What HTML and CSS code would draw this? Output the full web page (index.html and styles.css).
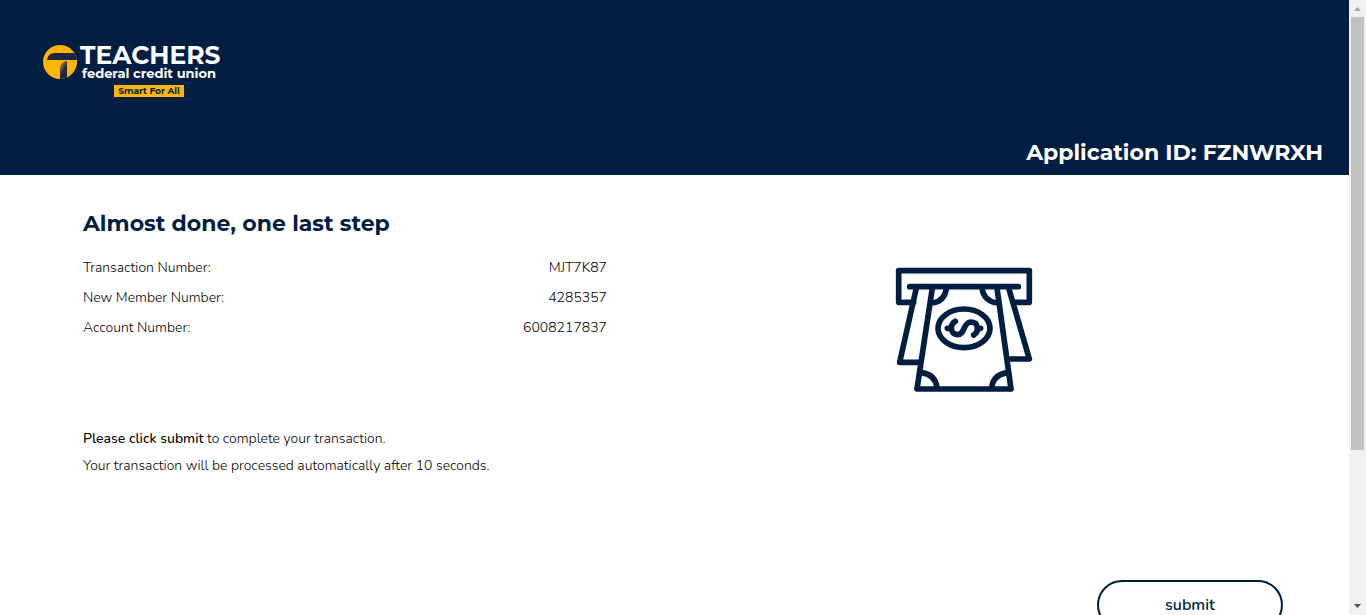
FILE: index.html
```html
<!DOCTYPE html>
<html lang="en">
<head>
<meta charset="utf-8">
<meta name="viewport" content="width=device-width, initial-scale=1">
<title>Teachers Federal Credit Union</title>
<link rel="stylesheet" href="styles.css">
</head>
<body>
<div class="shell">
  <div class="page">
    <header class="header">
      <svg class="logo" viewBox="0 0 180 56" role="img" aria-label="Teachers Federal Credit Union, Smart For All">
        <defs>
          <linearGradient id="fold" x1="0" y1="0" x2="0.6" y2="1">
            <stop offset="0" stop-color="#d09a2a"/>
            <stop offset="0.2" stop-color="#94733c"/>
            <stop offset="0.6" stop-color="#1d2545"/>
          </linearGradient>
          <clipPath id="disc"><circle cx="18" cy="19" r="17"/></clipPath>
        </defs>
        <g clip-path="url(#disc)">
          <rect width="36" height="38" fill="#ffb600"/>
          <path d="M5 17 Q6 10 13 10 H36 V17 H5 Z" fill="#1d2545"/>
          <path d="M18 38 V25 Q18 19 25 18 V38 Z" fill="url(#fold)"/>
        </g>
        <text class="logo-name" x="38" y="21">TEACHERS</text>
        <text class="logo-sub" x="40" y="35">federal credit union</text>
        <rect x="72" y="42" width="70" height="12" fill="#ffb600"/>
        <text class="logo-tag" x="107" y="51">Smart For All</text>
      </svg>
      <p class="application">Application ID: FZNWRXH</p>
    </header>
    <main class="content">
      <section class="details">
        <h1 class="title">Almost done, one last step</h1>
        <dl class="numbers">
          <div class="row"><dt>Transaction Number:</dt><dd>MJT7K87</dd></div>
          <div class="row"><dt>New Member Number:</dt><dd>4285357</dd></div>
          <div class="row"><dt>Account Number:</dt><dd>6008217837</dd></div>
        </dl>
        <p class="note"><strong>Please click submit</strong> to complete your transaction.</p>
        <p class="note">Your transaction will be processed automatically after 10 seconds.</p>
      </section>
      <div class="picture">
        <svg class="cash" viewBox="0 0 480 435" aria-hidden="true">
          <g fill="none" stroke="#001e42" stroke-width="17" stroke-linecap="round" stroke-linejoin="round">
            <path d="M86 133 H41 V38 H433 V133 H388"/>
            <path d="M74 86 H400"/>
            <path d="M94 90 L44 313 H102"/>
            <path d="M371 90 L433 303 H376"/>
            <path d="M142 90 L96 393 H378 L336 90"/>
            <path d="M184 92 Q178 128 146 134"/>
            <path d="M291 92 Q298 128 332 134"/>
            <path d="M108 344 Q150 348 156 388"/>
            <path d="M370 344 Q326 348 320 388"/>
            <ellipse cx="237" cy="211" rx="78" ry="58"/>
            <path d="M187 211 H197 M277 211 H287"/>
            <path d="M211 190 C193 200 196 229 217 230 C240 231 234 193 257 192 C281 192 284 220 266 231"/>
          </g>
        </svg>
      </div>
      <div class="actions"><button class="submit" type="button">submit</button></div>
    </main>
  </div>
  <div class="scrollbar" aria-hidden="true">
    <svg class="arrow" viewBox="0 0 17 17"><path d="M5 11 L8.500 7 L12 11 Z" fill="#a3a3a3"/></svg>
    <div class="track"><div class="thumb"></div></div>
    <svg class="arrow" viewBox="0 0 17 17"><path d="M5 6 H12 L8.500 10 Z" fill="#505050"/></svg>
  </div>
</div>
</body>
</html>
```
FILE: styles.css
```css
* { box-sizing: border-box; }
body {
  margin: 0;
  background: #fff;
  color: #000;
  font-family: Nunito, "Open Sans", sans-serif;
  font-size: 14px;
  font-weight: 300;
}
p, h1, dl, dd { margin: 0; }
.shell { display: flex; height: 100vh; overflow: hidden; }
.page { flex: 1; min-width: 0; overflow: hidden; }
.header {
  display: flex;
  flex-direction: column;
  justify-content: space-between;
  padding: 43px 26px 7px 42px;
  min-height: 175px;
  background: #001e42;
  color: #fff;
}
.logo { width: 180px; height: 56px; overflow: visible; }
.logo text { font-family: Montserrat, Inter, sans-serif; fill: #fff; }
.logo .logo-name { font-size: 25px; font-weight: 700; }
.logo .logo-sub { font-size: 13px; font-weight: 700; }
.logo .logo-tag { font-size: 9px; font-weight: 700; fill: #001e42; text-anchor: middle; }
.application {
  align-self: flex-end;
  font: 700 22px/30px Montserrat, Inter, sans-serif;
}
.content {
  display: grid;
  grid-template-columns: 524fr 638fr;
  column-gap: 38px;
  padding: 34px 66px 40px 83px;
}
.title {
  margin-bottom: 14px;
  color: #001e42;
  font: 700 22px/30px Montserrat, Inter, sans-serif;
}
.numbers { margin-bottom: 82px; }
.row { display: flex; justify-content: space-between; line-height: 30px; }
.note { line-height: 27px; }
.note strong { font-weight: 500; }
.picture { display: flex; justify-content: center; padding: 49px 0 0 2px; }
.cash { width: 160px; height: 145px; }
.actions { grid-column: 1 / -1; display: flex; justify-content: flex-end; padding-top: 101px; }
.submit {
  width: 186px;
  height: 50px;
  border: 2px solid #001e42;
  border-radius: 25px;
  background: #fff;
  color: #001e42;
  font: 600 16px/20px Nunito, "Open Sans", sans-serif;
}
.scrollbar { display: flex; flex-direction: column; width: 17px; background: #f1f1f1; }
.arrow { width: 17px; height: 17px; }
.track { flex: 1; padding: 0 2px; }
.thumb { height: 74.5%; background: #c1c1c1; }
```
